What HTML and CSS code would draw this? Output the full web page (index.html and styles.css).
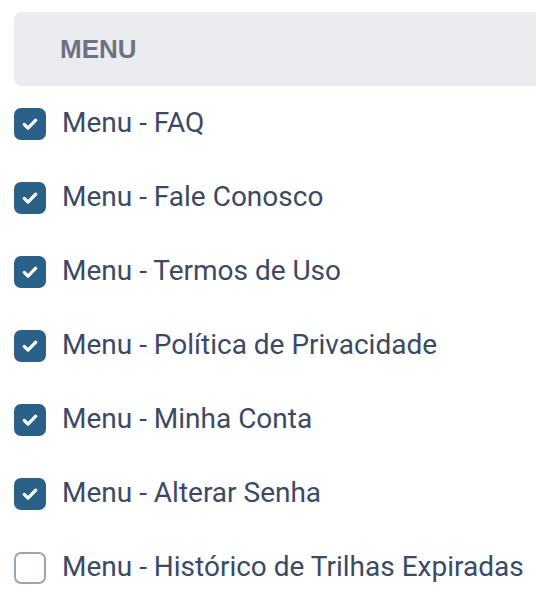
FILE: index.html
```html
<!DOCTYPE html>
<html lang="pt-BR">
<head>
  <meta charset="UTF-8">
  <title>Permissões - Menu</title>
  <link rel="stylesheet" href="styles.css">
</head>
<body>

<div class="grupo">
  <div class="grupo-titulo">MENU</div>
  <ul class="lista">
    <li class="item"><span class="caixa marcada"><svg viewBox="0 0 16 16"><path d="M3.4 8.3l3 3 6.2-6.4"/></svg></span><span class="rotulo">Menu - FAQ</span></li>
    <li class="item"><span class="caixa marcada"><svg viewBox="0 0 16 16"><path d="M3.4 8.3l3 3 6.2-6.4"/></svg></span><span class="rotulo">Menu - Fale Conosco</span></li>
    <li class="item"><span class="caixa marcada"><svg viewBox="0 0 16 16"><path d="M3.4 8.3l3 3 6.2-6.4"/></svg></span><span class="rotulo">Menu - Termos de Uso</span></li>
    <li class="item"><span class="caixa marcada"><svg viewBox="0 0 16 16"><path d="M3.4 8.3l3 3 6.2-6.4"/></svg></span><span class="rotulo">Menu - Política de Privacidade</span></li>
    <li class="item"><span class="caixa marcada"><svg viewBox="0 0 16 16"><path d="M3.4 8.3l3 3 6.2-6.4"/></svg></span><span class="rotulo">Menu - Minha Conta</span></li>
    <li class="item"><span class="caixa marcada"><svg viewBox="0 0 16 16"><path d="M3.4 8.3l3 3 6.2-6.4"/></svg></span><span class="rotulo">Menu - Alterar Senha</span></li>
    <li class="item"><span class="caixa"></span><span class="rotulo">Menu - Histórico de Trilhas Expiradas</span></li>
  </ul>
</div>

</body>
</html>
```
FILE: styles.css
```css
body { margin: 0; font-family: Roboto, "Liberation Sans", sans-serif; background: #fff; overflow: hidden; }
.grupo { padding: 12px 0 0 14px; }
.grupo-titulo { height: 74px; margin-right: -20px; padding-left: 46px; display: flex; align-items: center; background: #ebecef; border-radius: 8px; font-family: "Liberation Sans", Arial, sans-serif; font-weight: bold; font-size: 26px; color: #6b7385; }
.lista { list-style: none; margin: 22px 0 0; padding: 0; display: flex; flex-direction: column; gap: 42px; }
.item { display: flex; align-items: center; gap: 16px; height: 32px; font-size: 28px; color: #3c4965; white-space: nowrap; }
.rotulo { margin-top: -3px; }
.caixa { width: 32px; height: 32px; box-sizing: border-box; border: 2px solid #9ea4b0; border-radius: 7px; display: flex; align-items: center; justify-content: center; flex-shrink: 0; }
.caixa.marcada { background: #2b6089; border-color: #2b6089; }
.caixa svg { width: 20px; height: 20px; fill: none; stroke: #fff; stroke-width: 2.6; stroke-linecap: round; stroke-linejoin: round; }
```
